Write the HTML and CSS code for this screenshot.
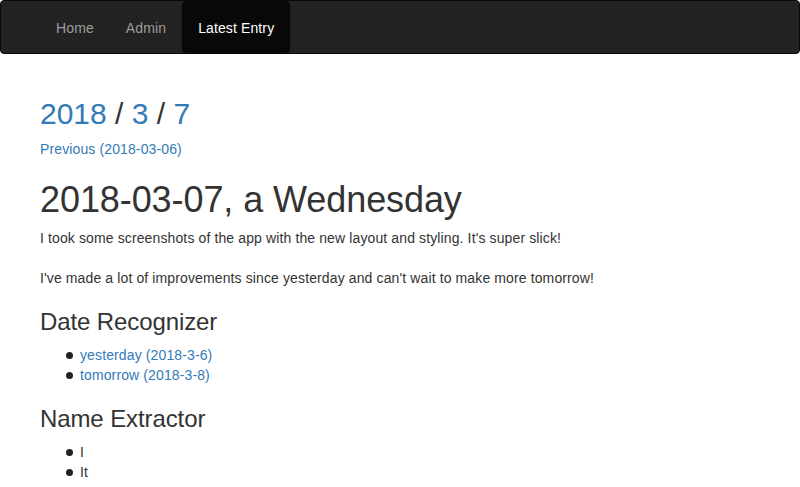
FILE: index.html
```html
<!DOCTYPE html>
<html lang="en">
<head>
<meta charset="utf-8">
<title>2018-03-07</title>
<link rel="stylesheet" href="styles.css">
</head>
<body>
<nav class="navbar">
  <div class="container">
    <ul class="nav">
      <li><a href="#">Home</a></li>
      <li><a href="#">Admin</a></li>
      <li class="active"><a href="#">Latest Entry</a></li>
    </ul>
  </div>
</nav>
<main class="container">
  <h2 class="crumbs"><a href="#">2018</a> / <a href="#">3</a> / <a href="#">7</a></h2>
  <p class="prev"><a href="#">Previous (2018-03-06)</a></p>
  <h1 class="title">2018-03-07, a Wednesday</h1>
  <p class="body-p">I took some screenshots of the app with the new layout and styling. It's super slick!</p>
  <p class="body-p">I've made a lot of improvements since yesterday and can't wait to make more tomorrow!</p>
  <h3 class="section">Date Recognizer</h3>
  <ul class="items">
    <li><a href="#">yesterday (2018-3-6)</a></li>
    <li><a href="#">tomorrow (2018-3-8)</a></li>
  </ul>
  <h3 class="section">Name Extractor</h3>
  <ul class="items">
    <li>I</li>
    <li>It</li>
  </ul>
</main>
</body>
</html>
```
FILE: styles.css
```css
* { box-sizing: border-box; }
html, body { margin: 0; padding: 0; }
body {
  font-family: "Liberation Sans", Arial, Helvetica, sans-serif;
  font-size: 14px;
  line-height: 20px;
  letter-spacing: 0.12px;
  color: #333;
  background: #fff;
}
a { color: #337ab7; text-decoration: none; }
.container {
  width: 750px;
  margin: 0 auto;
  padding: 0 15px;
}
.navbar {
  background: #222;
  border: 1px solid #080808;
  border-radius: 4px;
  min-height: 54px;
  margin-bottom: 20px;
}
.nav {
  display: flex;
  list-style: none;
  margin: 0;
  padding: 0;
}
.nav a {
  display: block;
  padding: 17px 16px 15px;
  line-height: 20px;
  color: #9d9d9d;
}
.nav .active a {
  color: #fff;
  background: #080808;
  border-radius: 4px;
}
.crumbs {
  font-size: 30px;
  font-weight: 500;
  line-height: 33px;
  letter-spacing: 0;
  margin: 43px 0 9px;
}
.prev { margin: 0 0 10px; }
.title {
  font-size: 36px;
  font-weight: 500;
  line-height: 40px;
  letter-spacing: -0.08px;
  margin: 21px 0 8px;
}
.body-p { margin: 0 0 20px; }
.section {
  font-size: 24px;
  font-weight: 500;
  line-height: 26px;
  letter-spacing: -0.1px;
  margin: 21px 0 10px;
}
.items {
  list-style: none;
  margin: 0 0 10px;
  padding-left: 40px;
}
.items li {
  position: relative;
  line-height: 20px;
}
.items li::before {
  content: "";
  position: absolute;
  left: -14px;
  top: 7px;
  width: 7px;
  height: 7px;
  border-radius: 50%;
  background: #222;
}
```
